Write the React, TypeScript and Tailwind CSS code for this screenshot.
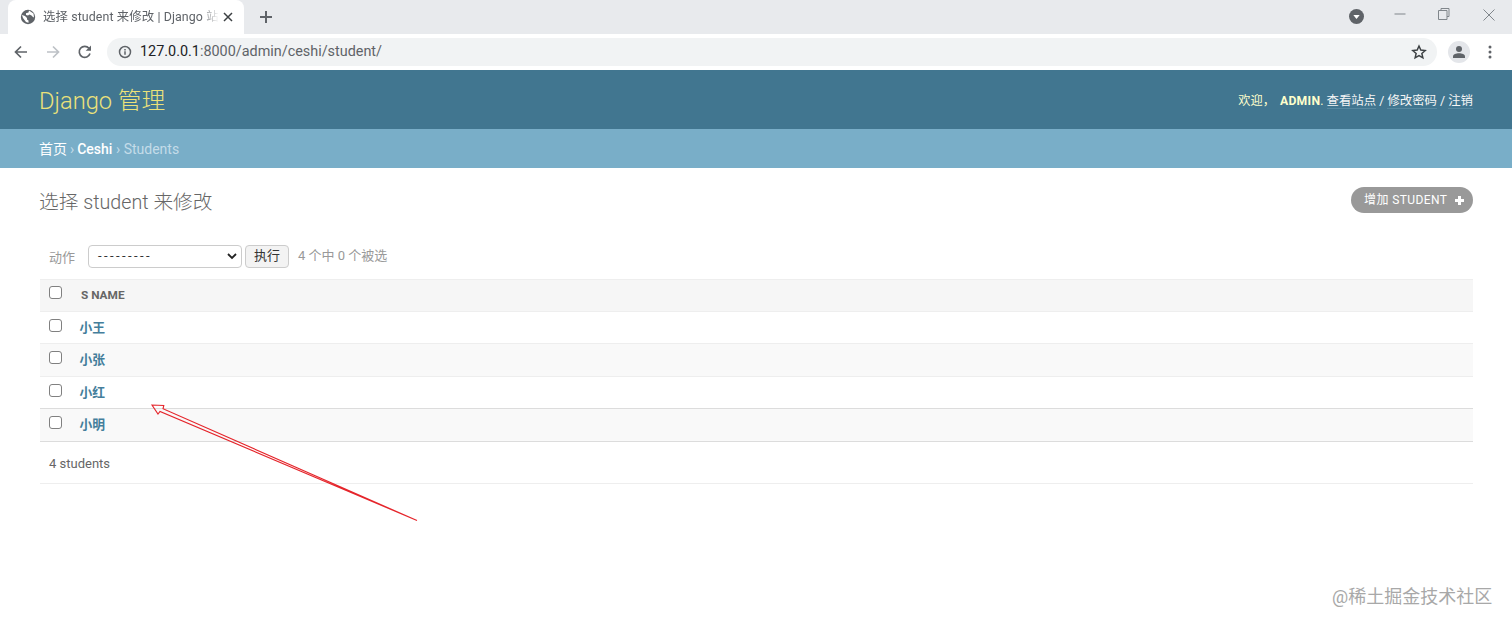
import React from "react";

const cjk = "font-['Roboto','Noto_Sans_CJK_SC',sans-serif]";

function Box() {
  return <span className="block h-[13px] w-[13px] rounded-[3px] border border-[#808080] bg-white" />;
}

function Row({ name, alt, strong }: { name: string; alt?: boolean; strong?: boolean }) {
  return (
    <div className={`flex h-[32.5px] items-center border-b ${strong ? "border-[#dcdcdc]" : "border-[#eeeeee]"} ${alt ? "bg-[#f9f9f9]" : "bg-white"}`}>
      <div className="w-[40px] pl-[9px] pb-[4px]">
        <Box />
      </div>
      <a className="-ml-[0.5px] text-[12.8px] font-bold text-[#447e9b]">{name}</a>
    </div>
  );
}

export default function App() {
  return (
    <div className={`relative h-[625px] w-[1512px] overflow-hidden bg-white ${cjk}`}>
      {/* tab strip */}
      <div className="flex h-[34px] items-end bg-[#e8eaed] pl-[8px]">
        <div className="flex h-[34px] w-[236px] items-center rounded-t-[8px] bg-white pl-[12px]">
          <svg width="16" height="16" viewBox="0 0 16 16" className="shrink-0">
            <circle cx="8" cy="8" r="7.2" fill="#5f6368" />
            <path d="M2 6l3 1 2 2v1.500l1.500 1v2.300L6 13 3 9zM9 1.500l-.5 2-2.500.8V6l2 .5 1.500-1 2 1L13 8l1 .5-.5-4z" fill="#fff" />
          </svg>
          <span className="ml-[7px] whitespace-nowrap text-[12.4px] tracking-[0.1px] text-[#5f6368] [mask-image:linear-gradient(to_right,black_90%,transparent_100%)]">选择 student 来修改 | Django 站</span>
          <svg width="10" height="10" viewBox="0 0 10 10" className="ml-auto mr-[11px] shrink-0">
            <path d="M1 1l8 8M9 1l-8 8" stroke="#3c4043" strokeWidth="1.500" />
          </svg>
        </div>
        <svg width="14" height="14" viewBox="0 0 14 14" className="mb-[10px] ml-[15px]">
          <path d="M7 1v12M1 7h12" stroke="#5f6368" strokeWidth="2" />
        </svg>
        <div className="mb-[9px] ml-auto flex items-center">
          <svg width="15" height="15" viewBox="0 0 15 15">
            <circle cx="7.500" cy="7.500" r="7.500" fill="#5f6368" />
            <path d="M4.300 6h6.400l-3.200 4z" fill="#fff" />
          </svg>
          <svg width="12" height="12" viewBox="0 0 12 12" className="ml-[30px] mb-[5px]">
            <path d="M0.500 6h11" stroke="#80868b" />
          </svg>
          <svg width="12" height="12" viewBox="0 0 12 12" className="ml-[32px] mb-[5px]">
            <path d="M3 2.500V.5h8v8H9M.5 2.500h8.500v9H.5z" fill="none" stroke="#80868b" />
          </svg>
          <svg width="12" height="12" viewBox="0 0 12 12" className="ml-[33px] mb-[4px] mr-[17px]">
            <path d="M.5.5l11 11M11.500.5l-11 11" stroke="#80868b" />
          </svg>
        </div>
      </div>
      {/* toolbar */}
      <div className="flex h-[36px] items-center bg-white">
        <svg width="16" height="16" viewBox="0 0 16 16" className="ml-[13px]">
          <path d="M14 8H3M8 2.500L2.500 8 8 13.500" fill="none" stroke="#5f6368" strokeWidth="1.700" />
        </svg>
        <svg width="16" height="16" viewBox="0 0 16 16" className="ml-[16px]">
          <path d="M2 8h11M8 2.500L13.500 8 8 13.500" fill="none" stroke="#bdc1c6" strokeWidth="1.700" />
        </svg>
        <svg width="16" height="16" viewBox="0 0 16 16" className="ml-[16px]">
          <path d="M13 9.500A5.500 5.500 0 1 1 12 4.300" fill="none" stroke="#5f6368" strokeWidth="1.700" />
          <path d="M14 1.500V6.800H8.700z" fill="#5f6368" />
        </svg>
        <div className="ml-[14px] flex h-[28px] w-[1330px] items-center rounded-full bg-[#f1f3f4] pl-[11px]">
          <svg width="14" height="14" viewBox="0 0 14 14">
            <circle cx="7" cy="7" r="5.500" fill="none" stroke="#5f6368" strokeWidth="1.500" />
            <path d="M7 6.300v3.500M7 4v1.500" stroke="#5f6368" strokeWidth="1.500" />
          </svg>
          <span className="ml-[8px] text-[14.4px] text-[#5f6368]">
            <span className="text-[#202124]">127.0.0.1</span>:8000/admin/ceshi/student/
          </span>
          <svg width="16" height="16" viewBox="0 0 24 24" className="ml-auto mr-[10px] mb-[1px]">
            <path d="M12 3l2.700 6.100 6.600.7-5 4.400 1.500 6.500L12 17.300 6.200 20.700l1.500-6.500-5-4.400 6.600-.7z" fill="none" stroke="#3c4043" strokeWidth="2.200" />
          </svg>
        </div>
        <div className="ml-[11px] flex h-[22px] w-[22px] items-center justify-center rounded-full bg-[#e4e6ea]">
          <svg width="14" height="14" viewBox="0 0 14 14">
            <circle cx="7" cy="4" r="3" fill="#5f6368" />
            <path d="M1 13v-1.500C1 9.500 4 8.300 7 8.300s6 1.200 6 3.200V13z" fill="#5f6368" />
          </svg>
        </div>
        <svg width="4" height="14" viewBox="0 0 4 14" className="ml-[18px]">
          <circle cx="2" cy="2" r="1.500" fill="#5f6368" />
          <circle cx="2" cy="7" r="1.500" fill="#5f6368" />
          <circle cx="2" cy="12" r="1.500" fill="#5f6368" />
        </svg>
      </div>
      {/* django header */}
      <div className="flex h-[59px] items-center justify-between bg-[#417690] pl-[39px] pr-[39px]">
        <span className="pt-[4px] text-[23.7px] font-light text-[#ece27a]">Django 管理</span>
        <div className="flex items-center pt-[4px] text-[12.2px] text-[#ffffcc]">
          <span>欢迎，</span>
          <span className="ml-[5px] font-bold tracking-[0.3px]">ADMIN</span>
          <span>.</span>
          <span className="ml-[3px] text-[12.4px] text-[#f5f5f5]">
            <a className="border-b border-[#5788a0]">查看站点</a> / <a className="border-b border-[#5788a0]">修改密码</a> / <a className="border-b border-[#5788a0]">注销</a>
          </span>
        </div>
      </div>
      {/* breadcrumb */}
      <div className="flex h-[39px] items-center bg-[#79aec8] pl-[39px] pt-[2px] text-[14px] text-[#c4dce8]">
        <span className="text-white">首页</span>
        <span className="mx-[3px]">›</span>
        <span className="font-medium text-white">Ceshi</span>
        <span className="mx-[3.500px]">›</span>
        <span>Students</span>
      </div>
      {/* content */}
      <div className="pl-[40px] pr-[39px]">
        <div className="flex h-[66px] items-center justify-between">
          <h1 className="-ml-[1px] pt-[3px] text-[19.7px] font-light text-[#666666]">选择 student 来修改</h1>
          <div className="mb-[2px] flex h-[26px] w-[122px] items-center rounded-full bg-[#999999] pl-[13px] text-[12px] tracking-[0.4px] text-white">
            <span>增加 STUDENT</span>
            <svg width="11" height="11" viewBox="0 0 11 11" className="ml-[7px]">
              <path d="M5.500 1v9M1 5.500h9" stroke="#fff" strokeWidth="3" />
            </svg>
          </div>
        </div>
        <div className="flex h-[45px] items-center pb-[1px] pl-[9px] text-[13px] text-[#999999]">
          <span className="pt-[3px]">动作</span>
          <div className="ml-[13px] flex h-[23px] w-[154px] items-center justify-between rounded-[4px] border border-[#cccccc] bg-white pl-[9px] pr-[4px] text-[13px] tracking-[2.4px] text-[#333333]">
            <span>---------</span>
            <svg width="10" height="7" viewBox="0 0 10 7">
              <path d="M1 1l4 4 4-4" fill="none" stroke="#222" strokeWidth="1.800" />
            </svg>
          </div>
          <div className="ml-[3px] flex h-[23px] w-[44px] items-center justify-center rounded-[4px] border border-[#cccccc] bg-[#f3f3f3] text-[13px] text-[#333333]">执行</div>
          <span className="ml-[9px] text-[13px]">4 个中 0 个被选</span>
        </div>
        <div className="flex h-[32.5px] items-center border-y border-[#eeeeee] bg-[#f6f6f6]">
          <div className="w-[40px] pl-[9px] pb-[5px]">
            <Box />
          </div>
          <span className="ml-[1px] pt-[1px] text-[11.8px] font-bold text-[#666666]">S NAME</span>
        </div>
        <Row name="小王" />
        <Row name="小张" alt />
        <Row name="小红" strong />
        <Row name="小明" alt strong />
        <div className="flex h-[42px] items-center border-b border-[#eeeeee] pl-[9px] pt-[3px] text-[13px] text-[#666666]">4 students</div>
      </div>
      {/* annotation arrow */}
      <svg width="300" height="130" viewBox="0 0 300 130" className="absolute left-[140px] top-[400px]">
        <path d="M277 120.500L23 8.800 23.800 5.500 12 5 18 14 20 11.500z" fill="none" stroke="#e5252b" strokeWidth="1.100" />
      </svg>
      {/* watermark */}
      <span className="absolute left-[1332px] top-[583px] text-[18px] text-[#a8a8a8]">@稀土掘金技术社区</span>
    </div>
  );
}
